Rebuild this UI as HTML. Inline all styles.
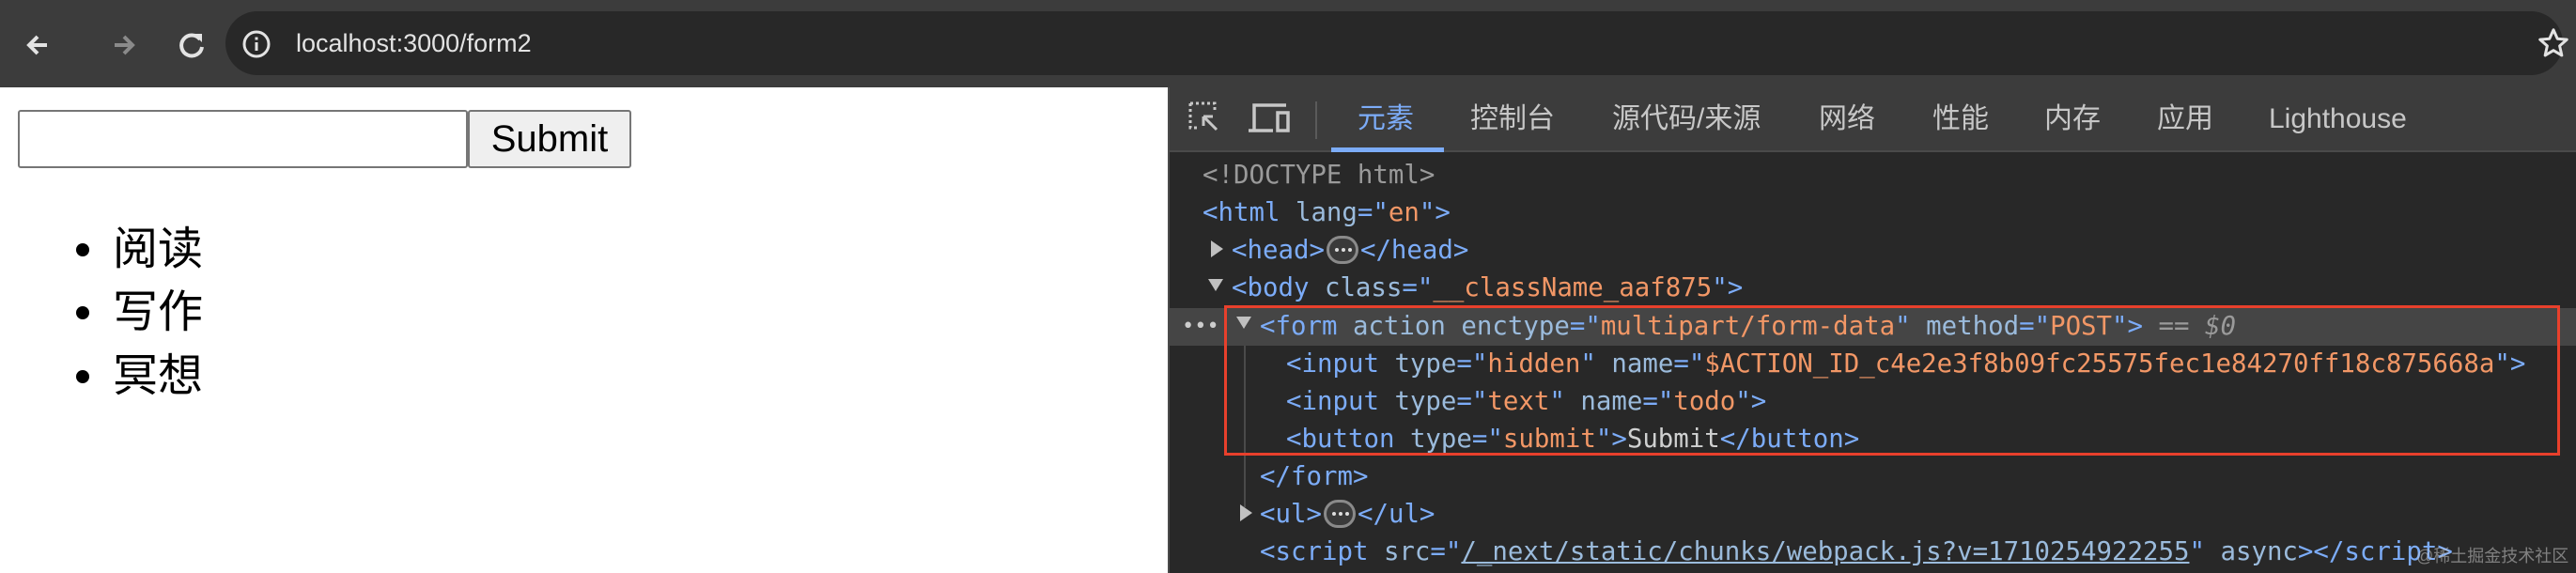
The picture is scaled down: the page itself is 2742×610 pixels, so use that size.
<!DOCTYPE html>
<html><head><meta charset="utf-8"><style>
*{margin:0;padding:0;box-sizing:border-box}
body{width:2742px;height:610px;overflow:hidden;background:#fff;position:relative;font-family:"Liberation Sans","Noto Sans CJK SC",sans-serif}
.abs{position:absolute}
#bar{left:0;top:0;width:2742px;height:93px;background:#3c3c3c}
#url{left:240px;top:12px;width:2488px;height:68px;border-radius:34px;background:#282828}
#urltxt{left:315px;top:26px;font-size:27px;color:#e3e3e3;line-height:40px}
#dev{left:1243px;top:93px;width:1499px;height:517px;background:#282828;border-left:2px solid #4a4a4a}
#tabs{left:1245px;top:93px;width:1497px;height:69px;background:#3c3c3c;border-bottom:2px solid #4a4a4a}
.tab{top:106px;font-size:30px;color:#c7c7c7;line-height:42px}
.code{font-family:"DejaVu Sans Mono",monospace;font-size:27.4px;line-height:40px;height:40px;white-space:pre;color:#cfd0d0}
.t{color:#7cacf8}.a{color:#9bbbdc}.v{color:#f29766}.g{color:#9a9a9a}
.tri{width:0;height:0;border-style:solid}
.dots{display:inline-block;width:34px;height:30px;border:3px solid #8a8a8a;border-radius:15px;vertical-align:middle;background:#3a3a3a;position:relative;top:-2px;margin:0 2px}
.dots:after{content:"";position:absolute;left:6px;top:10px;width:4px;height:4px;border-radius:2px;background:#ddd;box-shadow:7px 0 #ddd,14px 0 #ddd}
.li{font-size:48px;line-height:70px;color:#000;white-space:nowrap}
.bul{width:14px;height:14px;border-radius:7px;background:#000}
</style></head><body>
<div class="abs" id="bar"></div>
<svg class="abs" style="left:20px;top:28px" width="200" height="40" viewBox="0 0 200 40">
<path d="M30 20H12M20 11l-9 9 9 9" stroke="#e3e3e3" stroke-width="4" fill="none"/>
<path d="M102 20h18M112 11l9 9-9 9" stroke="#8a8a8a" stroke-width="4" fill="none"/>
<path d="M193 14a11 11 0 1 0 2 8" stroke="#e3e3e3" stroke-width="4" fill="none"/><path d="M186 8h9v9z" fill="#e3e3e3"/>
</svg>
<div class="abs" id="url"></div>
<svg class="abs" style="left:256px;top:30px" width="34" height="34"><circle cx="17" cy="17" r="13" stroke="#e3e3e3" stroke-width="3" fill="none"/><rect x="15.5" y="15" width="3" height="9" fill="#e3e3e3"/><rect x="15.5" y="9.5" width="3" height="3" fill="#e3e3e3"/></svg>
<div class="abs" id="urltxt">localhost:3000/form2</div>
<svg class="abs" style="left:2700px;top:28px" width="36" height="36" viewBox="0 0 24 24"><path d="M12 2.5l2.8 6.3 6.7.6-5.1 4.5 1.5 6.7L12 17.1l-5.9 3.5 1.5-6.7-5.1-4.5 6.7-.6z" stroke="#e3e3e3" stroke-width="2" fill="none" stroke-linejoin="round"/></svg>

<div class="abs" style="left:19px;top:117px;width:479px;height:62px;border:2px solid #767676;border-radius:3px;background:#fff"></div>
<div class="abs" style="left:498px;top:117px;width:174px;height:62px;border:2px solid #767676;border-radius:3px;background:#efefef;font-size:40px;line-height:58px;text-align:center;color:#000">Submit</div>
<div class="abs bul" style="left:81px;top:259px"></div>
<div class="abs bul" style="left:81px;top:326px"></div>
<div class="abs bul" style="left:81px;top:394px"></div>
<div class="abs li" style="left:120px;top:231px">阅读</div>
<div class="abs li" style="left:120px;top:298px">写作</div>
<div class="abs li" style="left:120px;top:366px">冥想</div>

<div class="abs" id="dev"></div>
<div class="abs" id="tabs"></div>
<svg class="abs" style="left:1265px;top:108px" width="120" height="40">
<path d="M2 2h26v8M2 2v26h8" stroke="#c7c7c7" stroke-width="3" stroke-dasharray="3 3" fill="none"/><path d="M16 16l14 14M16 16v10M16 16h10" stroke="#c7c7c7" stroke-width="3" fill="none"/>
<path d="M70 30V4h34M64 31h26M95 12h11v19H95z" stroke="#c7c7c7" stroke-width="3.5" fill="none"/>
</svg>
<div class="abs" style="left:1400px;top:108px;width:2px;height:40px;background:#5a5a5a"></div>
<div class="abs tab" style="left:1445px;color:#7cacf8">元素</div>
<div class="abs" style="left:1417px;top:157px;width:120px;height:5px;background:#7cacf8"></div>
<div class="abs tab" style="left:1565px">控制台</div>
<div class="abs tab" style="left:1716px">源代码/来源</div>
<div class="abs tab" style="left:1936px">网络</div>
<div class="abs tab" style="left:2057px">性能</div>
<div class="abs tab" style="left:2176px">内存</div>
<div class="abs tab" style="left:2296px">应用</div>
<div class="abs tab" style="left:2415px">Lighthouse</div>

<div class="abs" style="left:1245px;top:328px;width:1497px;height:40px;background:#454545"></div>
<div class="abs" style="left:1324px;top:368px;width:2px;height:172px;background:#4a4a4a"></div>
<div class="abs" style="left:1303px;top:325px;width:1422px;height:160px;border:3px solid #e8402c"></div>
<div class="abs code" style="left:1258px;top:328px;color:#ccc;font-size:22px">•••</div>

<div class="abs code g" style="left:1280px;top:167px">&lt;!DOCTYPE html&gt;</div>
<div class="abs code" style="left:1280px;top:207px"><span class="t">&lt;html</span> <span class="a">lang</span><span class="t">="</span><span class="v">en</span><span class="t">"&gt;</span></div>
<div class="abs tri" style="left:1289px;top:256px;border-width:9px 0 9px 13px;border-color:transparent transparent transparent #c0c0c0"></div>
<div class="abs code" style="left:1311px;top:247px"><span class="t">&lt;head&gt;</span><span class="dots"></span><span class="t">&lt;/head&gt;</span></div>
<div class="abs tri" style="left:1286px;top:297px;border-width:13px 8px 0 8px;border-color:#c0c0c0 transparent transparent transparent"></div>
<div class="abs code" style="left:1311px;top:287px"><span class="t">&lt;body</span> <span class="a">class</span><span class="t">="</span><span class="v">__className_aaf875</span><span class="t">"&gt;</span></div>
<div class="abs tri" style="left:1316px;top:337px;border-width:13px 8px 0 8px;border-color:#c0c0c0 transparent transparent transparent"></div>
<div class="abs code" style="left:1341px;top:328px"><span class="t">&lt;form</span> <span class="a">action enctype</span><span class="t">="</span><span class="v">multipart/form-data</span><span class="t">"</span> <span class="a">method</span><span class="t">="</span><span class="v">POST</span><span class="t">"&gt;</span> <span class="g">== <i>$0</i></span></div>
<div class="abs code" style="left:1369px;top:368px"><span class="t">&lt;input</span> <span class="a">type</span><span class="t">="</span><span class="v">hidden</span><span class="t">"</span> <span class="a">name</span><span class="t">="</span><span class="v">$ACTION_ID_c4e2e3f8b09fc25575fec1e84270ff18c875668a</span><span class="t">"&gt;</span></div>
<div class="abs code" style="left:1369px;top:408px"><span class="t">&lt;input</span> <span class="a">type</span><span class="t">="</span><span class="v">text</span><span class="t">"</span> <span class="a">name</span><span class="t">="</span><span class="v">todo</span><span class="t">"&gt;</span></div>
<div class="abs code" style="left:1369px;top:448px"><span class="t">&lt;button</span> <span class="a">type</span><span class="t">="</span><span class="v">submit</span><span class="t">"&gt;</span>Submit<span class="t">&lt;/button&gt;</span></div>
<div class="abs code" style="left:1341px;top:488px"><span class="t">&lt;/form&gt;</span></div>
<div class="abs tri" style="left:1320px;top:537px;border-width:9px 0 9px 13px;border-color:transparent transparent transparent #c0c0c0"></div>
<div class="abs code" style="left:1341px;top:528px"><span class="t">&lt;ul&gt;</span><span class="dots"></span><span class="t">&lt;/ul&gt;</span></div>
<div class="abs code" style="left:1341px;top:568px"><span class="t">&lt;script</span> <span class="a">src</span><span class="t">="</span><span class="v" style="text-decoration:underline;color:#9bbbdc">/_next/static/chunks/webpack.js?v=1710254922255</span><span class="t">"</span> <span class="a">async</span><span class="t">&gt;&lt;/script&gt;</span></div>
<div class="abs" style="left:2572px;top:578px;font-size:18px;white-space:nowrap;color:rgba(200,200,200,0.55)">@稀土掘金技术社区</div>
</body></html>
